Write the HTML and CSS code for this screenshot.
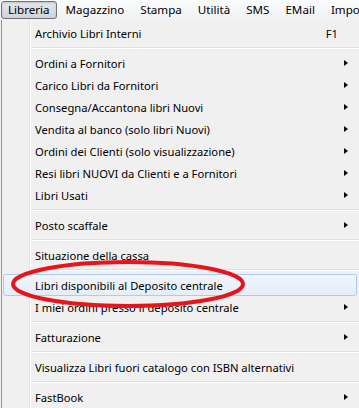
FILE: index.html
```html
<!DOCTYPE html>
<html>
<head>
<link rel="stylesheet" href="styles.css">
</head>
<body>
    <div class="menubar">
        <span class="bar-item active">Libreria</span>
        <span class="bar-item">Magazzino</span>
        <span class="bar-item">Stampa</span>
        <span class="bar-item">Utilità</span>
        <span class="bar-item">SMS</span>
        <span class="bar-item">EMail</span>
        <span class="bar-item">Impostazioni</span>
    </div>

    <div class="menu">
        <div class="item">Archivio Libri Interni<span class="key">F1</span></div>
        <div class="sep"></div>
        <div class="item">Ordini a Fornitori<span class="arrow"></span></div>
        <div class="item">Carico Libri da Fornitori<span class="arrow"></span></div>
        <div class="item">Consegna/Accantona libri Nuovi<span class="arrow"></span></div>
        <div class="item">Vendita al banco (solo libri Nuovi)<span class="arrow"></span></div>
        <div class="item">Ordini dei Clienti (solo visualizzazione)<span class="arrow"></span></div>
        <div class="item">Resi libri NUOVI da Clienti e a Fornitori<span class="arrow"></span></div>
        <div class="item">Libri Usati<span class="arrow"></span></div>
        <div class="sep"></div>
        <div class="item">Posto scaffale<span class="arrow"></span></div>
        <div class="sep"></div>
        <div class="item">Situazione della cassa</div>
        <div class="sep"></div>
        <div class="item hover">Libri disponibili al Deposito centrale</div>
        <div class="item">I miei ordini presso il deposito centrale<span class="arrow"></span></div>
        <div class="sep"></div>
        <div class="item">Fatturazione<span class="arrow"></span></div>
        <div class="sep"></div>
        <div class="item">Visualizza Libri fuori catalogo con ISBN alternativi</div>
        <div class="sep"></div>
        <div class="item">FastBook<span class="arrow"></span></div>
    </div>

    <!-- red marker drawn over the screenshot -->
    <svg class="circle" width="250" height="56" viewBox="0 0 250 56">
        <ellipse cx="121" cy="27" rx="115" ry="22" fill="none" stroke="#e8141c" stroke-width="4"/>
    </svg>
</body>
</html>
```

FILE: styles.css
```css
body {
    margin: 0;
    background-color: #f0f0f0;
    font-family: "Noto Sans", sans-serif;
    font-size: 11.2px;
    color: #000;
    overflow: hidden;
    position: relative;
}

.menubar {
    display: flex;
    height: 20px;
    align-items: center;
    background: linear-gradient(#fbfcfd, #eff1f4);
    white-space: nowrap;
}

.bar-item {
    padding: 0 7px;
    height: 18px;
    line-height: 16px;
    box-sizing: border-box;
    border: 1px solid transparent;
    font-size: 11.6px;
}

.bar-item.active {
    margin-left: 1px;
    margin-right: 1px;
    padding: 0 6px;
    border: 1px solid #707378;
    border-radius: 3px;
    background: linear-gradient(#e4e7eb, #cfd4da);
    box-shadow: inset 0 1px 2px rgba(0, 0, 0, 0.15);
}

.menu {
    margin-left: 1px;
    border-left: 1px solid #979797;
    padding-top: 2px;
    background:
        linear-gradient(to right, transparent 27px, #e2e3e3 27px, #e2e3e3 28px, #fff 28px, #fff 29px, transparent 29px),
        #f0f0f0;
}

.item {
    display: flex;
    align-items: center;
    height: 22px;
    padding-left: 33px;
    padding-right: 11px;
    white-space: nowrap;
}

.item.hover {
    margin: 0 2px 0 1px;
    padding-left: 31px;
    box-sizing: border-box;
    border: 1px solid #a8cdf5;
    border-radius: 3px;
    background: linear-gradient(#f2f6fc, #e5edf8);
}

.key {
    margin-left: auto;
    margin-right: 10px;
}

.arrow {
    margin-left: auto;
    width: 0;
    height: 0;
    border-left: 4px solid #000;
    border-top: 3.5px solid transparent;
    border-bottom: 3.5px solid transparent;
}

.sep {
    height: 8px;
    box-sizing: border-box;
    padding-top: 3px;
    margin-left: 29px;
}

.sep::after {
    content: "";
    display: block;
    border-top: 1px solid #e0e0e0;
    border-bottom: 1px solid #fff;
}

.circle {
    position: absolute;
    left: 7px;
    top: 257px;
}
```
